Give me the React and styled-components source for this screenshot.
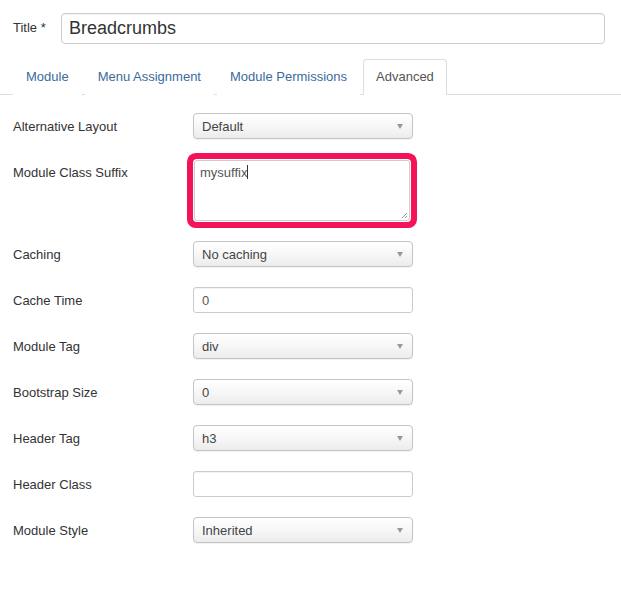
import React from 'react';
import styled, { createGlobalStyle } from 'styled-components';

const GlobalStyle = createGlobalStyle`
  html, body {
    margin: 0;
    padding: 0;
    background: #ffffff;
  }
  body {
    font-family: 'Liberation Sans', Arial, sans-serif;
    font-size: 13px;
    color: #333;
  }
`;

const Page = styled.div`
  width: 621px;
  min-height: 592px;
  box-sizing: border-box;
  padding: 13px 0 0 13px;
`;

const TitleRow = styled.div`
  display: flex;
  align-items: center;
  padding-right: 16px;
`;

const TitleLabel = styled.label`
  width: 48px;
  font-size: 13px;
  color: #333;
  margin-top: -3px;
`;

const TitleInput = styled.input`
  flex: 1;
  height: 31px;
  box-sizing: border-box;
  border: 1px solid #ccc;
  border-radius: 4px;
  padding: 0 7px;
  font-family: 'Liberation Sans', Arial, sans-serif;
  font-size: 18px;
  color: #333;
  box-shadow: inset 0 1px 1px rgba(0, 0, 0, 0.06);
  outline: none;
`;

const Tabs = styled.ul`
  display: flex;
  list-style: none;
  margin: 15px 0 0 -13px;
  padding: 0 0 0 13px;
  border-bottom: 1px solid #ddd;
`;

const Tab = styled.li`
  margin-right: 3px;
  margin-bottom: -1px;
  padding: 8px 12px;
  line-height: 18px;
  font-size: 13px;
  border: 1px solid ${({ active }) => (active ? '#ddd' : 'transparent')};
  border-bottom-color: ${({ active }) => (active ? '#fff' : 'transparent')};
  border-radius: 4px 4px 0 0;
  background: #fff;
  color: ${({ active }) => (active ? '#555' : '#3b6b9c')};
`;

const Form = styled.div`
  display: flex;
  flex-direction: column;
  gap: 20px;
  margin-top: 18px;
`;

const Row = styled.div`
  display: flex;
  align-items: flex-start;
`;

const Label = styled.label`
  width: 180px;
  flex-shrink: 0;
  padding-top: 6px;
  line-height: 16px;
  font-size: 13px;
  color: #333;
`;

const Select = styled.div`
  width: 220px;
  height: 26px;
  box-sizing: border-box;
  border: 1px solid #c4c4c4;
  border-radius: 4px;
  background: linear-gradient(to bottom, #ffffff 0%, #f6f6f6 55%, #ececec 100%);
  box-shadow: 0 1px 1px rgba(0, 0, 0, 0.06);
  padding: 0 8px;
  display: flex;
  align-items: center;
  justify-content: space-between;
  font-size: 13px;
  color: #444;
`;

const Arrow = styled.span`
  width: 0;
  height: 0;
  border-left: 3px solid transparent;
  border-right: 3px solid transparent;
  border-top: 5px solid #999;
  margin-right: 1px;
`;

const TextInput = styled.div`
  width: 220px;
  height: 26px;
  box-sizing: border-box;
  border: 1px solid #ccc;
  border-radius: 3px;
  background: #fff;
  box-shadow: inset 0 1px 1px rgba(0, 0, 0, 0.05);
  padding: 0 8px;
  display: flex;
  align-items: center;
  font-size: 13px;
  color: #555;
`;

const TextArea = styled.div`
  position: relative;
  width: 216px;
  height: 61px;
  margin-left: 1px;
  margin-top: 1px;
  box-sizing: border-box;
  border: 1px solid #ccc;
  border-radius: 3px;
  background: #fff;
  padding: 4px 5px;
  font-size: 13px;
  color: #555;
  line-height: 16px;
  /* highlight frame drawn around the field */
  box-shadow: 0 0 0 1px #fff, 0 0 0 7px #f2135b;
`;

const Caret = styled.span`
  display: inline-block;
  width: 1px;
  height: 14px;
  background: #333;
  vertical-align: -2px;
`;

const Grip = styled.svg`
  position: absolute;
  right: 1px;
  bottom: 1px;
`;

const fields = [
  { label: 'Alternative Layout', type: 'select', value: 'Default' },
  { label: 'Module Class Suffix', type: 'textarea', value: 'mysuffix' },
  { label: 'Caching', type: 'select', value: 'No caching' },
  { label: 'Cache Time', type: 'input', value: '0' },
  { label: 'Module Tag', type: 'select', value: 'div' },
  { label: 'Bootstrap Size', type: 'select', value: '0' },
  { label: 'Header Tag', type: 'select', value: 'h3' },
  { label: 'Header Class', type: 'input', value: '' },
  { label: 'Module Style', type: 'select', value: 'Inherited' },
];

const Control = ({ type, value }) => {
  if (type === 'select') {
    return (
      <Select>
        <span>{value}</span>
        <Arrow />
      </Select>
    );
  }
  if (type === 'textarea') {
    return (
      <TextArea>
        {value}
        <Caret />
        <Grip width="7" height="7" viewBox="0 0 7 7">
          <path d="M6 1 L1 6 M6 4 L4 6" stroke="#999" strokeWidth="1" />
        </Grip>
      </TextArea>
    );
  }
  return <TextInput>{value}</TextInput>;
};

const App = () => {
  const tabs = ['Module', 'Menu Assignment', 'Module Permissions', 'Advanced'];
  return (
    <Page>
      <GlobalStyle />
      <TitleRow>
        <TitleLabel>Title *</TitleLabel>
        <TitleInput defaultValue="Breadcrumbs" />
      </TitleRow>
      <Tabs>
        {tabs.map((t) => (
          <Tab key={t} active={t === 'Advanced'}>
            {t}
          </Tab>
        ))}
      </Tabs>
      <Form>
        {fields.map((f) => (
          <Row key={f.label}>
            <Label>{f.label}</Label>
            <Control type={f.type} value={f.value} />
          </Row>
        ))}
      </Form>
    </Page>
  );
};

export default App;
